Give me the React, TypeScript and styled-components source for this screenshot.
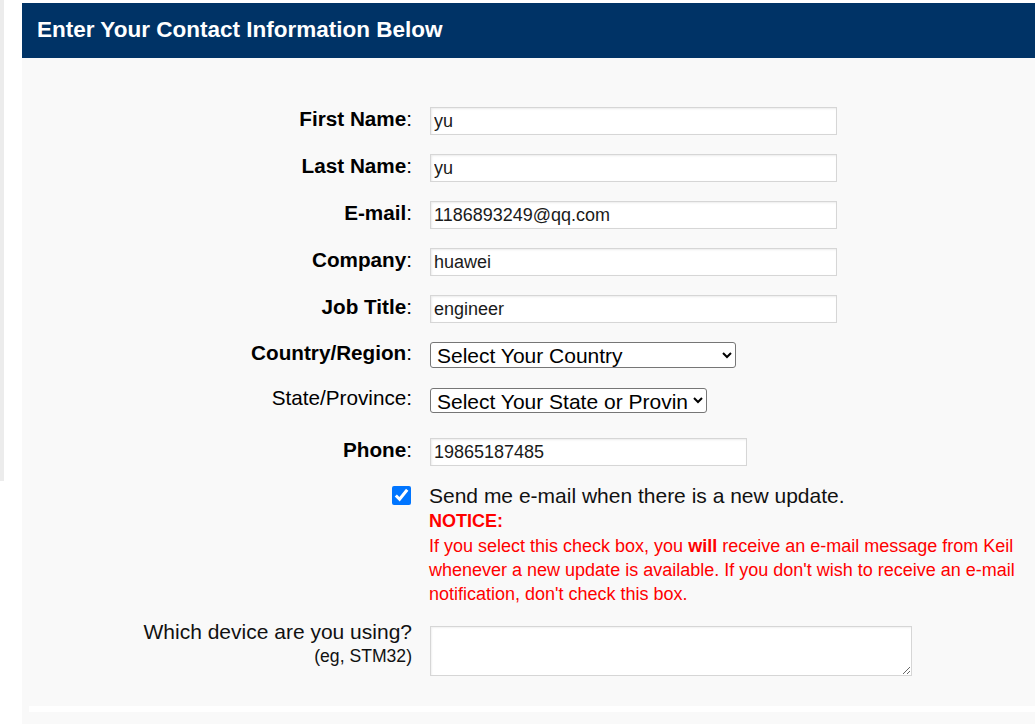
import React from "react";
import styled, { createGlobalStyle } from "styled-components";

const Global = createGlobalStyle`
  html, body { margin: 0; padding: 0; background: #ffffff; }
  body { font-family: "Liberation Sans", Arial, sans-serif; }
  * { box-sizing: border-box; }
`;

const Page = styled.div`
  display: flex;
  align-items: flex-start;
  gap: 18px;
  min-height: 724px;
`;

const SideStrip = styled.div`
  width: 4px;
  height: 481px;
  background: #ececec;
  flex: none;
`;

const Panel = styled.section`
  flex: 1;
  margin-top: 3px;
  background: #f9f9f9;
  min-height: 721px;
  display: flex;
  flex-direction: column;
`;

const Header = styled.h2`
  margin: 0;
  height: 55px;
  padding: 0 0 2px 15px;
  display: flex;
  align-items: center;
  background: #003366;
  color: #ffffff;
  font-size: 22.5px;
  font-weight: 700;
`;

const Body = styled.div`
  padding: 49px 0 30px 0;
`;

const Form = styled.form`
  display: grid;
  grid-template-columns: 390px 1fr;
  column-gap: 18px;
  row-gap: 19px;
  align-items: center;
`;

const Label = styled.label<{ $mt?: number }>`
  justify-self: end;
  text-align: right;
  color: #000;
  font-size: 20.7px;
  line-height: 24px;
  margin-top: ${(p) => (p.$mt ?? 0) - 5}px;
  b { font-weight: 700; }
`;

const TextInput = styled.input<{ $w: number; $mt?: number }>`
  width: ${(p) => p.$w}px;
  height: 28px;
  margin: ${(p) => p.$mt ?? 0}px 0 0 0;
  padding: 0 3px;
  border: 1px solid #d6d6d6;
  box-shadow: inset 1px 1px 2px rgba(0, 0, 0, 0.08);
  background: #ffffff;
  color: #1a1a1a;
  font-family: "Liberation Sans", Arial, sans-serif;
  font-size: 18px;
  outline: none;
`;

const Select = styled.select<{ $w: number; $h: number; $mt?: number }>`
  width: ${(p) => p.$w}px;
  height: ${(p) => p.$h}px;
  margin-top: ${(p) => p.$mt ?? 0}px;
  border: 1px solid #767676;
  border-radius: 3px;
  background: #ffffff;
  color: #000;
  font-family: "Liberation Sans", Arial, sans-serif;
  font-size: 21px;
  padding: 0 2px;
`;

const CheckCell = styled.div`
  justify-self: end;
  align-self: start;
  padding-top: 1px;
  margin-right: 1px;
`;

const Check = styled.input`
  width: 19px;
  height: 19px;
  margin: 0;
  display: block;
  accent-color: #0075ff;
`;

const CheckText = styled.div`
  align-self: start;
  margin-top: -1px;
  margin-left: -1px;
`;

const SendLine = styled.div`
  font-size: 21px;
  line-height: 24px;
  color: #111;
`;

const NoticeTitle = styled.div`
  font-weight: 700;
  font-size: 18px;
  line-height: 26px;
  color: #ff0000;
`;

const NoticeLine = styled.div`
  color: #ff0000;
  font-size: 18px;
  line-height: 24px;
  white-space: nowrap;
  b { font-weight: 700; }
`;

const DeviceLabel = styled.div`
  justify-self: end;
  align-self: start;
  text-align: right;
  margin-top: -5px;
`;

const DeviceQuestion = styled.div`
  font-size: 21px;
  line-height: 24px;
  color: #111;
`;

const DeviceHint = styled.div`
  font-size: 17.6px;
  line-height: 24px;
  color: #111;
`;

const Area = styled.textarea`
  align-self: start;
  width: 482px;
  height: 50px;
  margin-top: 1px;
  border: 1px solid #d6d6d6;
  box-shadow: inset 1px 1px 2px rgba(0, 0, 0, 0.06);
  background: #ffffff;
  font-family: "Liberation Sans", Arial, sans-serif;
  font-size: 16px;
  outline: none;
`;

const Footer = styled.div`
  margin-left: 7px;
  height: 6px;
  background: #ffffff;
`;

type Field = { label: string; value: string };

const fields: Field[] = [
  { label: "First Name", value: "yu" },
  { label: "Last Name", value: "yu" },
  { label: "E-mail", value: "1186893249@qq.com" },
  { label: "Company", value: "huawei" },
  { label: "Job Title", value: "engineer" },
];

export default function App() {
  return (
    <>
      <Global />
      <Page>
        <SideStrip />
        <Panel>
          <Header>Enter Your Contact Information Below</Header>
          <Body>
            <Form onSubmit={(e) => e.preventDefault()}>
              {fields.map((f) => (
                <React.Fragment key={f.label}>
                  <Label>
                    <b>{f.label}</b>:
                  </Label>
                  <TextInput $w={407} defaultValue={f.value} />
                </React.Fragment>
              ))}
              <Label $mt={1}>
                <b>Country/Region</b>:
              </Label>
              <Select $w={306} $h={26} defaultValue="">
                <option value="">Select Your Country</option>
              </Select>
              <Label $mt={1}>State/Province:</Label>
              <Select $w={277} $h={25} $mt={1} defaultValue="">
                <option value="">Select Your State or Province</option>
              </Select>
              <Label $mt={6}>
                <b>Phone</b>:
              </Label>
              <TextInput $w={317} $mt={6} defaultValue="19865187485" />
              <CheckCell>
                <Check type="checkbox" defaultChecked />
              </CheckCell>
              <CheckText>
                <SendLine>Send me e-mail when there is a new update.</SendLine>
                <NoticeTitle>NOTICE:</NoticeTitle>
                <NoticeLine>
                  If you select this check box, you <b>will</b> receive an e-mail message from Keil
                </NoticeLine>
                <NoticeLine>
                  whenever a new update is available. If you don't wish to receive an e-mail
                </NoticeLine>
                <NoticeLine>notification, don't check this box.</NoticeLine>
              </CheckText>
              <DeviceLabel>
                <DeviceQuestion>Which device are you using?</DeviceQuestion>
                <DeviceHint>(eg, STM32)</DeviceHint>
              </DeviceLabel>
              <Area />
            </Form>
          </Body>
          <Footer />
        </Panel>
      </Page>
    </>
  );
}
